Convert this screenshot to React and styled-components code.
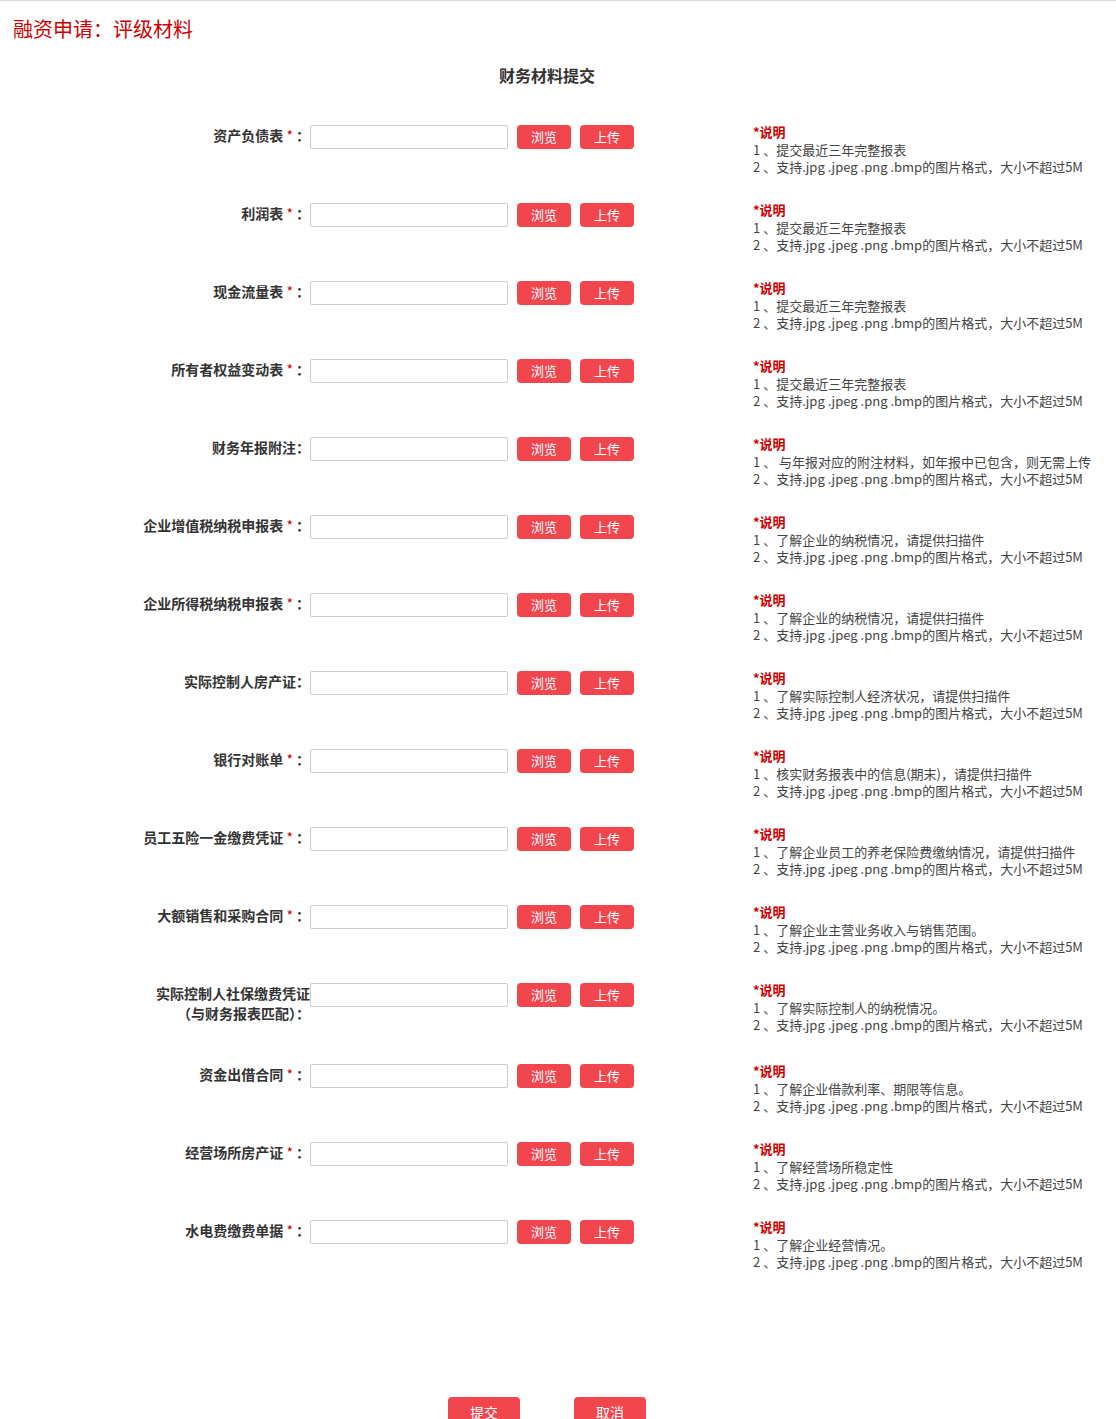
import React from "react";
import styled, { createGlobalStyle } from "styled-components";

const Global = createGlobalStyle`
  html, body { margin: 0; padding: 0; background: #fff; }
  body {
    font-family: "Microsoft YaHei", "Noto Sans CJK SC", sans-serif;
    color: #333;
    border-top: 1px solid #dcdcdc;
  }
`;

const Page = styled.div`
  width: 1094px;
  height: 1418px;
  overflow: hidden;
`;

const Header = styled.h1`
  margin: 0;
  padding: 13px 13px 0;
  font-size: 20px;
  line-height: 30px;
  font-weight: normal;
  color: #cc0000;
`;

const Title = styled.h2`
  margin: 19px 0 38px;
  text-align: center;
  font-size: 16px;
  line-height: 24px;
  font-weight: bold;
  color: #333;
`;

const List = styled.div`
  display: flex;
  flex-direction: column;
`;

const Row = styled.div`
  display: flex;
  align-items: flex-start;
  min-height: ${(p) => (p.$tall ? 81 : 78)}px;
`;

const Label = styled.label`
  width: 310px;
  flex: none;
  text-align: right;
  font-size: 14px;
  font-weight: bold;
  line-height: 20px;
  color: #333;
`;

const Star = styled.span`
  color: #cc0000;
  font-weight: normal;
  margin-right: 3px;
`;

const Field = styled.input`
  width: 198px;
  height: 24px;
  box-sizing: border-box;
  border: 1px solid #cccccc;
  border-radius: 2px;
  background: #fff;
  margin: 0;
  padding: 0 4px;
  flex: none;
`;

const SmallButton = styled.button`
  width: 54px;
  height: 24px;
  margin: 0 0 0 9px;
  padding: 0;
  border: none;
  border-radius: 4px;
  background: #f2464f;
  color: #fff;
  font-family: inherit;
  font-size: 13px;
  line-height: 24px;
  flex: none;
`;

const Notes = styled.div`
  margin: -2px 0 0 119px;
  font-size: 13px;
  line-height: 17.5px;
  color: #444;
`;

const NoteTitle = styled.div`
  color: #cc0000;
  font-weight: bold;
`;

const Footer = styled.div`
  display: flex;
  justify-content: center;
  gap: 54px;
  margin-top: 99px;
`;

const BigButton = styled.button`
  width: 72px;
  height: 30px;
  border: none;
  border-radius: 4px;
  background: #f2464f;
  color: #fff;
  font-family: inherit;
  font-size: 14px;
  line-height: 30px;
  padding: 0;
`;

const FMT = "支持.jpg .jpeg .png .bmp的图片格式，大小不超过5M";

const rows = [
  { label: "资产负债表", star: true, note: "提交最近三年完整报表" },
  { label: "利润表", star: true, note: "提交最近三年完整报表" },
  { label: "现金流量表", star: true, note: "提交最近三年完整报表" },
  { label: "所有者权益变动表", star: true, note: "提交最近三年完整报表" },
  { label: "财务年报附注", star: false, note: " 与年报对应的附注材料，如年报中已包含，则无需上传" },
  { label: "企业增值税纳税申报表", star: true, note: "了解企业的纳税情况，请提供扫描件" },
  { label: "企业所得税纳税申报表", star: true, note: "了解企业的纳税情况，请提供扫描件" },
  { label: "实际控制人房产证", star: false, note: "了解实际控制人经济状况，请提供扫描件" },
  { label: "银行对账单", star: true, note: "核实财务报表中的信息(期末)，请提供扫描件" },
  { label: "员工五险一金缴费凭证", star: true, note: "了解企业员工的养老保险费缴纳情况，请提供扫描件" },
  { label: "大额销售和采购合同", star: true, note: "了解企业主营业务收入与销售范围。" },
  { label: "实际控制人社保缴费凭证（与财务报表匹配）", star: false, note: "了解实际控制人的纳税情况。", tall: true },
  { label: "资金出借合同", star: true, note: "了解企业借款利率、期限等信息。" },
  { label: "经营场所房产证", star: true, note: "了解经营场所稳定性" },
  { label: "水电费缴费单据", star: true, note: "了解企业经营情况。" },
];

export default function App() {
  return (
    <Page>
      <Global />
      <Header>融资申请：评级材料</Header>
      <Title>财务材料提交</Title>
      <List>
        {rows.map((r, i) => (
          <Row key={i} $tall={r.tall}>
            <Label>
              {r.tall ? (
                <>
                  实际控制人社保缴费凭证
                  <br />
                  （与财务报表匹配）：
                </>
              ) : (
                <>
                  {r.label}
                  {r.star && <Star> *</Star>}：
                </>
              )}
            </Label>
            <Field type="text" />
            <SmallButton>浏览</SmallButton>
            <SmallButton>上传</SmallButton>
            <Notes>
              <NoteTitle>*说明</NoteTitle>
              <div>1 、{r.note}</div>
              <div>2 、{FMT}</div>
            </Notes>
          </Row>
        ))}
      </List>
      <Footer>
        <BigButton>提交</BigButton>
        <BigButton>取消</BigButton>
      </Footer>
    </Page>
  );
}
